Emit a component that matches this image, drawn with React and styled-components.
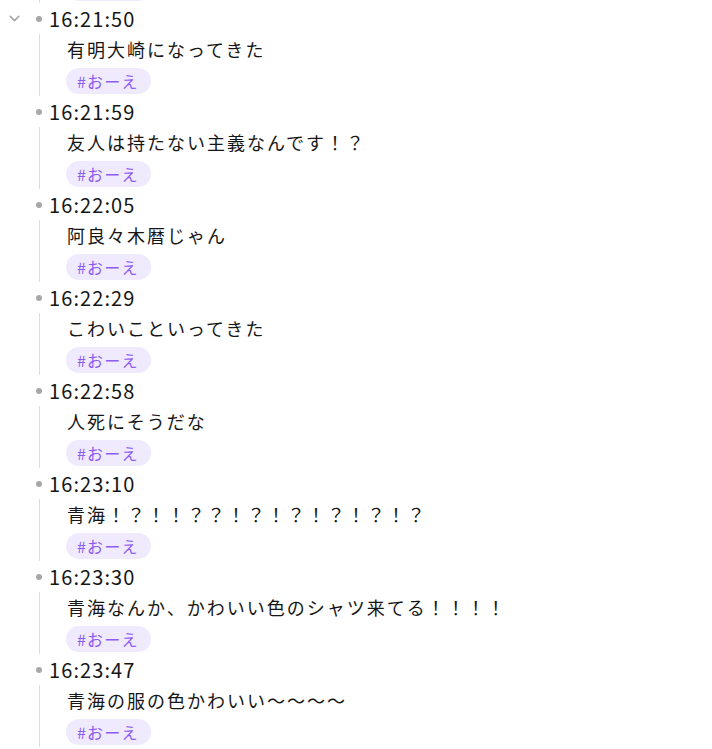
import React from 'react';
import styled, { createGlobalStyle } from 'styled-components';
import { ChevronDown } from 'lucide-react';

const GlobalStyle = createGlobalStyle`
    body {
        margin: 0;
        background: #fff;
        overflow: hidden;
        font-family: "Noto Sans CJK JP", "Noto Sans", sans-serif;
        color: #222;
    }
`;

const Page = styled.div`
    margin-top: -90px;
`;

const Block = styled.div`
    display: flex;
    flex-direction: column;
`;

const Header = styled.div`
    display: flex;
    align-items: center;
    height: 31px;
`;

const Toggle = styled.div`
    width: 28px;
    display: flex;
    justify-content: center;
    color: #a9a9a9;
    visibility: ${props => (props.show ? 'visible' : 'hidden')};
`;

const BulletWrap = styled.div`
    width: 21px;
    display: flex;
    justify-content: center;
`;

const Dot = styled.span`
    width: 6px;
    height: 6px;
    border-radius: 50%;
    background: #a8a8a8;
`;

const Time = styled.span`
    font-size: 20px;
    letter-spacing: 1.1px;
    line-height: 31px;
    color: #161616;
`;

const Children = styled.div`
    margin-left: 39px;
    border-left: 1px solid #dcdcdc;
    padding: 0 0 2px 27px;
    display: flex;
    flex-direction: column;
    align-items: flex-start;
    gap: 4px;
`;

const Text = styled.div`
    font-size: 18px;
    letter-spacing: 2px;
    line-height: 30px;
    min-height: 30px;
    color: #161616;
`;

const Tag = styled.span`
    height: 26px;
    line-height: 26px;
    padding: 0 12px 0 11px;
    margin-left: -1px;
    border-radius: 13px;
    background: #efeafd;
    color: #8c5cf0;
    font-size: 16px;
    letter-spacing: 1.2px;
`;

const entries = [
    { time: '16:21:41', text: '' },
    { time: '16:21:50', text: '有明大崎になってきた', open: true },
    { time: '16:21:59', text: '友人は持たない主義なんです！？' },
    { time: '16:22:05', text: '阿良々木暦じゃん' },
    { time: '16:22:29', text: 'こわいこといってきた' },
    { time: '16:22:58', text: '人死にそうだな' },
    { time: '16:23:10', text: '青海！？！！？？！？！？！？！？！？' },
    { time: '16:23:30', text: '青海なんか、かわいい色のシャツ来てる！！！！' },
    { time: '16:23:47', text: '青海の服の色かわいい〜〜〜〜' },
];

export default function App() {
    return (
        <>
            <GlobalStyle />
            <Page>
                {entries.map(e => (
                    <Block key={e.time}>
                        <Header>
                            <Toggle show={e.open}>
                                <ChevronDown size={17} strokeWidth={2.3} />
                            </Toggle>
                            <BulletWrap>
                                <Dot />
                            </BulletWrap>
                            <Time>{e.time}</Time>
                        </Header>
                        <Children>
                            <Text>{e.text}</Text>
                            <Tag>#おーえ</Tag>
                        </Children>
                    </Block>
                ))}
            </Page>
        </>
    );
}
